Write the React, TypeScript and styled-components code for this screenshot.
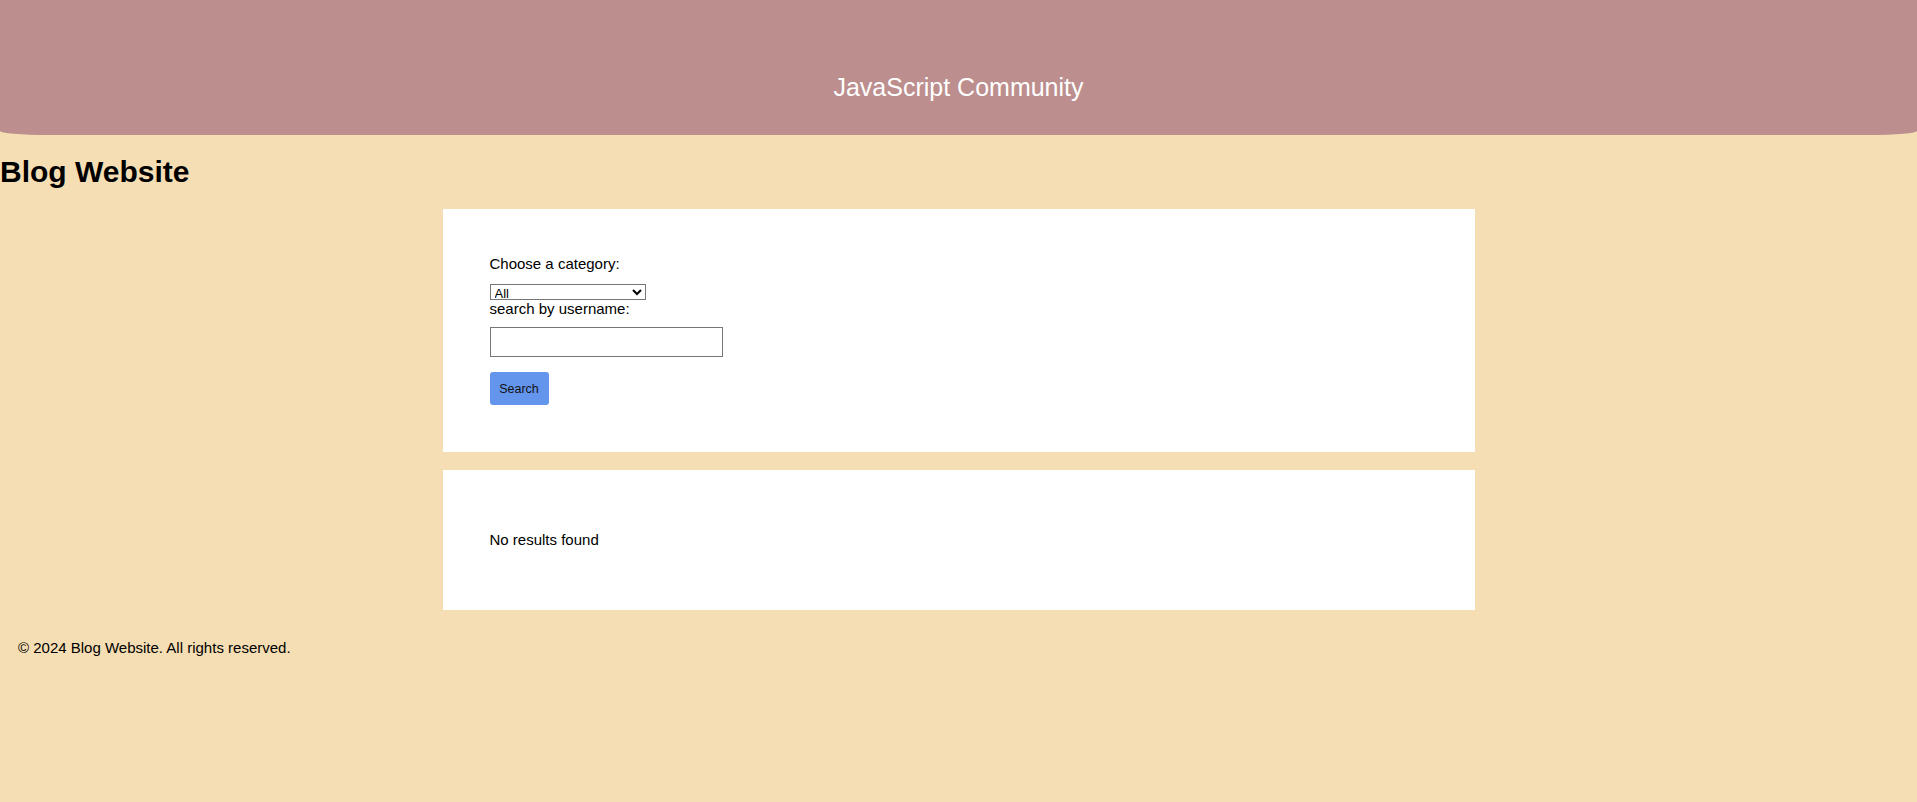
import React from 'react';
import styled, { createGlobalStyle } from 'styled-components';

const GlobalStyle = createGlobalStyle`
  html, body {
    margin: 0;
    padding: 0;
    background: #f5deb3;
    font-family: "Liberation Sans", Arial, sans-serif;
    color: #000;
  }
`;

const Header = styled.header`
  box-sizing: border-box;
  height: 135px;
  padding-top: 73px;
  background: #bc8e8e;
  border-radius: 0 0 48px 48px / 0 0 4px 4px;
  text-align: center;
`;

const HeaderTitle = styled.div`
  color: #fff;
  font-size: 25px;
  line-height: 28px;
`;

const PageTitle = styled.h1`
  margin: 20px 0;
  font-size: 30px;
  line-height: 34px;
  font-weight: bold;
`;

const Card = styled.section`
  box-sizing: border-box;
  width: 1032px;
  margin: 0 auto 18px;
  padding: 46px 47px 47px;
  background: #fff;
`;

const Label = styled.label<{ $gap: number }>`
  display: block;
  font-size: 15px;
  line-height: 17px;
  margin-bottom: ${(p) => p.$gap}px;
`;

const Select = styled.select`
  display: block;
  box-sizing: border-box;
  width: 156px;
  height: 16px;
  padding: 0;
  margin: 0;
  font-family: "Liberation Sans", Arial, sans-serif;
  font-size: 13px;
  border: 1px solid #767676;
  border-radius: 0;
  background: #fff;
  color: #000;
`;

const Input = styled.input`
  display: block;
  box-sizing: border-box;
  width: 233px;
  height: 30px;
  margin: 0 0 15px;
  border: 1px solid #767676;
  border-radius: 0;
  padding: 4px 6px;
`;

const Button = styled.button`
  display: block;
  box-sizing: border-box;
  width: 59px;
  height: 33px;
  padding: 0;
  border: none;
  border-radius: 3px;
  background: #6495ed;
  color: #111;
  font-family: "Liberation Sans", Arial, sans-serif;
  font-size: 12.5px;
`;

const Message = styled.p`
  margin: 15px 0;
  font-size: 15px;
  line-height: 17px;
`;

const Footer = styled.footer`
  padding: 11px 18px 20px;
  font-size: 15px;
  line-height: 17px;
`;

export default function App() {
  return (
    <>
      <GlobalStyle />
      <Header>
        <HeaderTitle>JavaScript Community</HeaderTitle>
      </Header>
      <PageTitle>Blog Website</PageTitle>
      <Card>
        <Label $gap={12} htmlFor="category">Choose a category:</Label>
        <Select id="category" defaultValue="All">
          <option>All</option>
        </Select>
        <Label $gap={10} htmlFor="username">search by username:</Label>
        <Input id="username" type="text" />
        <Button type="button">Search</Button>
      </Card>
      <Card>
        <Message>No results found</Message>
      </Card>
      <Footer>© 2024 Blog Website. All rights reserved.</Footer>
    </>
  );
}
